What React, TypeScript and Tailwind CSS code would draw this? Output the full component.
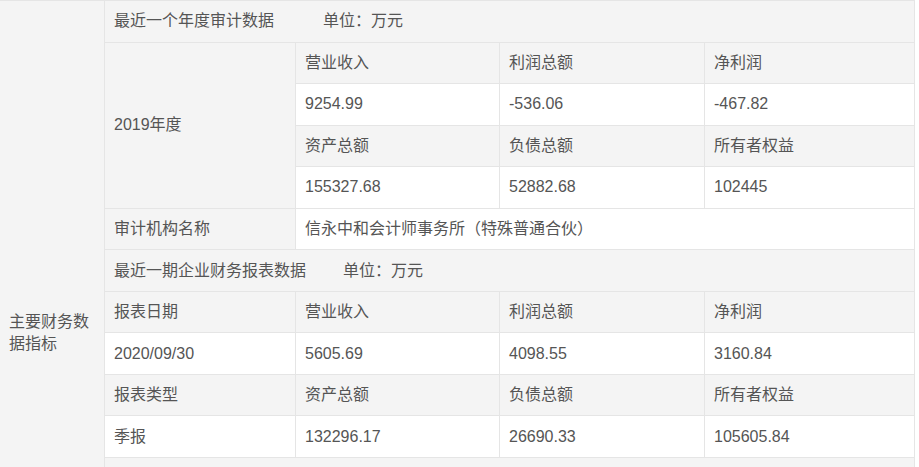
import React from "react";

type Tone = "g" | "w";

function Cell({
  children,
  tone = "g",
  className = "",
}: {
  children?: React.ReactNode;
  tone?: Tone;
  className?: string;
}) {
  return (
    <div
      className={`flex items-center px-[9px] whitespace-nowrap ${
        tone === "g" ? "bg-[#f4f4f4]" : "bg-white"
      } ${className}`}
    >
      {children}
    </div>
  );
}

function Row({ items, tone }: { items: string[]; tone: Tone }) {
  return (
    <>
      {items.map((t, i) => (
        <Cell key={i} tone={tone}>
          {t}
        </Cell>
      ))}
    </>
  );
}

export default function App() {
  return (
    <div className="w-[919px] min-h-[467px] bg-white text-[16px] text-[#555] font-['Liberation_Sans','Noto_Sans_CJK_SC',sans-serif]">
      <div className="w-fit border-t border-r border-[#e5e5e5]">
        <div className="grid grid-cols-[104px_190px_203px_204px_209px] grid-rows-[repeat(16,40.55px)] gap-px bg-[#e5e5e5]">
          <div className="row-span-16 flex items-center bg-[#f4f4f4] px-[9px] leading-[22px]">
            主要财务数据指标
          </div>

          <Cell className="col-span-4">
            <span>最近一个年度审计数据</span>
            <span className="ml-[49px]">单位：万元</span>
          </Cell>

          <Cell className="row-span-4">2019年度</Cell>
          <Row tone="g" items={["营业收入", "利润总额", "净利润"]} />
          <Row tone="w" items={["9254.99", "-536.06", "-467.82"]} />
          <Row tone="g" items={["资产总额", "负债总额", "所有者权益"]} />
          <Row tone="w" items={["155327.68", "52882.68", "102445"]} />

          <Cell>审计机构名称</Cell>
          <Cell tone="w" className="col-span-3">
            信永中和会计师事务所（特殊普通合伙）
          </Cell>

          <Cell className="col-span-4">
            <span>最近一期企业财务报表数据</span>
            <span className="ml-[37px]">单位：万元</span>
          </Cell>

          <Row tone="g" items={["报表日期", "营业收入", "利润总额", "净利润"]} />
          <Row tone="w" items={["2020/09/30", "5605.69", "4098.55", "3160.84"]} />
          <Row tone="g" items={["报表类型", "资产总额", "负债总额", "所有者权益"]} />
          <Row tone="w" items={["季报", "132296.17", "26690.33", "105605.84"]} />

          <Cell className="col-span-4" />
          <Row tone="g" items={["", "", "", ""]} />
          <Row tone="w" items={["", "", "", ""]} />
          <Row tone="g" items={["", "", "", ""]} />
          <Row tone="w" items={["", "", "", ""]} />
        </div>
      </div>
    </div>
  );
}
